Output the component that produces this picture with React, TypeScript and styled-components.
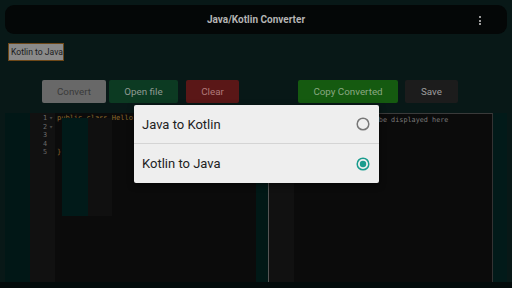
import React from "react";
import styled, { createGlobalStyle } from "styled-components";

const Global = createGlobalStyle`
  html, body { margin: 0; padding: 0; width: 512px; height: 288px; overflow: hidden; background: #020909; }
  * { box-sizing: border-box; }
`;

const Page = styled.div`
  position: relative;
  width: 512px;
  height: 288px;
  padding: 5px 5px 0 5px;
  background: #081817;
  font-family: Roboto, "Liberation Sans", sans-serif;
  display: flex;
  flex-direction: column;
  & > * { flex-shrink: 0; }
`;

const Header = styled.div`
  height: 29px;
  border-radius: 9px;
  background: #040707;
  display: flex;
  align-items: center;
  justify-content: center;
  position: relative;
  color: #b4b4b4;
  font-weight: 700;
  font-size: 10px;
`;

const Kebab = styled.div`
  position: absolute;
  right: 26px;
  top: 11px;
  display: flex;
  flex-direction: column;
  gap: 1.5px;
  span { width: 2px; height: 2px; background: #9a9a9a; }
`;

const ChipRow = styled.div`
  padding: 9px 0 0 3px;
  height: 27px;
`;

const Chip = styled.div`
  width: 56px;
  height: 18px;
  background: #8a8a8a;
  border: 1px solid #6e4818;
  color: #1c1c1c;
  font-size: 8.6px;
  display: flex;
  align-items: center;
  padding-left: 2px;
  white-space: nowrap;
  overflow: hidden;
`;

const ButtonRow = styled.div`
  display: flex;
  padding-top: 19px;
  height: 42px;
  align-items: flex-start;
`;

const Group = styled.div<{ $pl: number; $w: number }>`
  display: flex;
  padding-left: ${(p) => p.$pl}px;
  width: ${(p) => p.$w}px;
`;

const Btn = styled.div<{ $w: number; $bg: string; $fg: string; $ml?: number }>`
  width: ${(p) => p.$w}px;
  height: 23px;
  margin-left: ${(p) => p.$ml ?? 0}px;
  background: ${(p) => p.$bg};
  color: ${(p) => p.$fg};
  border-radius: 2px;
  font-size: 9.8px;
  display: flex;
  align-items: center;
  justify-content: center;
`;

const Editors = styled.div`
  display: flex;
  height: 169px;
  margin-top: 10px;
`;

const Strip = styled.div<{ $w: number; $bg: string }>`
  width: ${(p) => p.$w}px;
  background: ${(p) => p.$bg};
`;

const Editor = styled.div<{ $w: number; $border?: boolean }>`
  position: relative;
  width: ${(p) => p.$w}px;
  display: flex;
  background: #0b0b0b;
  border-left: ${(p) => (p.$border ? "1px solid #555" : "none")};
  border-top: ${(p) => (p.$border ? "1px solid #3a3a3a" : "none")};
  border-right: ${(p) => (p.$border ? "1px solid #333" : "none")};
`;

const Gutter = styled.div`
  width: 25px;
  background: #111;
  font-family: "DejaVu Sans Mono", monospace;
  font-size: 6.8px;
  color: #6a6a6a;
  padding-top: 1px;
`;

const Num = styled.div`
  height: 8.6px;
  line-height: 8.6px;
  text-align: right;
  padding-right: 8px;
  position: relative;
`;

const Fold = styled.span`
  position: absolute;
  right: 2px;
  color: #444;
`;

const Code = styled.div`
  flex: 1;
  font-family: "DejaVu Sans Mono", monospace;
  font-size: 7px;
  padding: 1px 0 0 2px;
  color: #8d6a2c;
  white-space: pre;
`;

const Line = styled.div`
  height: 8.6px;
  line-height: 8.6px;
`;

const Placeholder = styled.div`
  font-family: "DejaVu Sans Mono", monospace;
  font-size: 6.8px;
  color: #7a7a7a;
  padding: 2px 0 0 3px;
  white-space: pre;
`;

const Artifact = styled.div<{ $x: number; $w: number; $bg: string }>`
  position: absolute;
  left: ${(p) => p.$x}px;
  top: 5px;
  width: ${(p) => p.$w}px;
  height: 98px;
  background: ${(p) => p.$bg};
`;

const Bottom = styled.div`
  flex: 1;
  background: #030b0b;
  margin: 0 -5px;
`;

const Dialog = styled.div`
  position: absolute;
  left: 134px;
  top: 105px;
  width: 245px;
  background: #eeeeee;
  border-radius: 2px;
  box-shadow: 0 2px 6px rgba(0, 0, 0, 0.5);
`;

const Option = styled.div<{ $divider?: boolean }>`
  height: 39px;
  display: flex;
  align-items: center;
  justify-content: space-between;
  padding: 0 9px 0 8px;
  font-size: 13px;
  color: #222;
  border-bottom: ${(p) => (p.$divider ? "1px solid #d4d4d4" : "none")};
`;

const Radio = ({ checked }: { checked?: boolean }) => (
  <svg width="14" height="14" viewBox="0 0 14 14">
    <circle cx="7" cy="7" r="5.8" fill="none" stroke={checked ? "#1a9c8e" : "#777"} strokeWidth="1.5" />
    {checked && <circle cx="7" cy="7" r="3.2" fill="#1a9c8e" />}
  </svg>
);

export default function App() {
  return (
    <>
      <Global />
      <Page>
        <Header>
          Java/Kotlin Converter
          <Kebab>
            <span />
            <span />
            <span />
          </Kebab>
        </Header>
        <ChipRow>
          <Chip>Kotlin to Java</Chip>
        </ChipRow>
        <ButtonRow>
          <Group $pl={37} $w={251}>
            <Btn $w={64} $bg="#686868" $fg="#3a3a3a">Convert</Btn>
            <Btn $w={69} $ml={3} $bg="#0c3a22" $fg="#8f9a93">Open file</Btn>
            <Btn $w={53} $ml={8} $bg="#5a1717" $fg="#b07a7a">Clear</Btn>
          </Group>
          <Group $pl={42} $w={251}>
            <Btn $w={100} $bg="#155a10" $fg="#8aa882">Copy Converted</Btn>
            <Btn $w={53} $ml={7} $bg="#1c1c1c" $fg="#9c9c9c">Save</Btn>
          </Group>
        </ButtonRow>
        <Editors>
          <Strip $w={25} $bg="#011716" />
          <Editor $w={226}>
            <Gutter>
              <Num>1<Fold>▾</Fold></Num>
              <Num>2<Fold>▾</Fold></Num>
              <Num>3</Num>
              <Num>4</Num>
              <Num>5</Num>
            </Gutter>
            <Code>
              <Line>public class Hello</Line>
              <Line> </Line>
              <Line> </Line>
              <Line> </Line>
              <Line>{"}"}</Line>
            </Code>
            <Artifact $x={32} $w={26} $bg="#011a19" />
            <Artifact $x={58} $w={24} $bg="#101010" />
          </Editor>
          <Strip $w={12} $bg="#011816" />
          <Editor $w={225} $border>
            <Gutter />
            <Placeholder>Converted code will be displayed here</Placeholder>
          </Editor>
          <Strip $w={14} $bg="#021a19" />
        </Editors>
        <Bottom />
        <Dialog>
          <Option $divider>
            Java to Kotlin
            <Radio />
          </Option>
          <Option>
            Kotlin to Java
            <Radio checked />
          </Option>
        </Dialog>
      </Page>
    </>
  );
}
